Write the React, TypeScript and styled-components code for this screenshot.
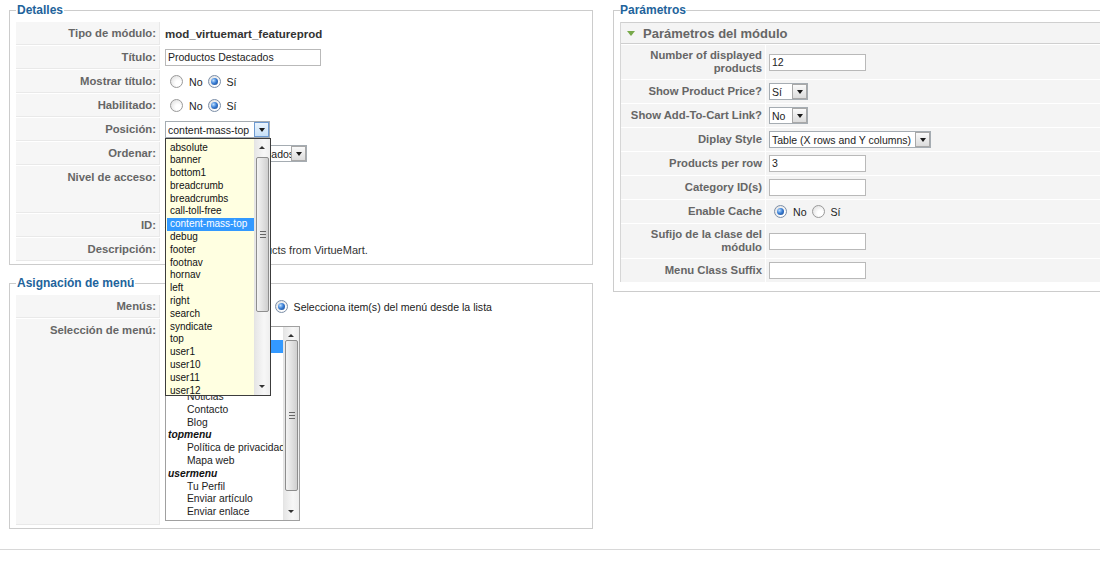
import React from 'react';
import styled, { createGlobalStyle, css } from 'styled-components';

const GlobalStyle = createGlobalStyle`
  html, body {
    margin: 0;
    padding: 0;
    background: #fff;
  }
  body {
    font-family: "Liberation Sans", Arial, sans-serif;
    font-size: 11px;
    color: #333;
  }
  * { box-sizing: border-box; }
`;

const Page = styled.div`
  width: 1100px;
  height: 561px;
  overflow: hidden;
`;

const Columns = styled.div`
  display: grid;
  grid-template-columns: 584px 520px;
  column-gap: 20px;
  padding: 3px 0 0 9px;
  align-items: start;
`;

const LeftCol = styled.div`
  display: flex;
  flex-direction: column;
  gap: 11px;
`;

const Fieldset = styled.fieldset<{ $pb?: number }>`
  margin: 0;
  min-width: 0;
  border: 1px solid #ccc;
  padding: 5px 6px ${p => p.$pb ?? 3}px 6px;
`;

const Legend = styled.legend<{ $pad?: number }>`
  padding: 0 ${p => p.$pad ?? 1}px;
  font-size: 12px;
  line-height: 14px;
  font-weight: bold;
  color: #22639b;
`;

const FormTable = styled.div`
  display: flex;
  flex-direction: column;
  gap: 1px;
`;

const Row = styled.div`
  display: flex;
  gap: 1px;
  min-height: 23px;
`;

const Key = styled.div<{ $top?: boolean }>`
  width: 144px;
  flex: none;
  background: #f6f6f6;
  border-bottom: 1px solid #e9e9e9;
  border-right: 1px solid #e9e9e9;
  padding: 5px 3px 4px 0;
  display: flex;
  justify-content: flex-end;
  align-items: ${p => (p.$top ? 'flex-start' : 'center')};
  text-align: right;
  font-weight: bold;
  font-size: 11.3px;
  line-height: 13px;
  color: #666;
`;

const Value = styled.div<{ $pad?: string }>`
  flex: 1;
  display: flex;
  align-items: center;
  padding: ${p => p.$pad ?? '0 4px'};
  font-size: 11px;
  color: #333;
  white-space: nowrap;
  position: relative;
`;

const TopValue = styled(Value)`
  align-items: flex-start;
`;

const Strong = styled.span`
  font-weight: bold;
  font-size: 11.5px;
  color: #333;
`;

const TextInput = styled.div<{ $w: number }>`
  width: ${p => p.$w}px;
  height: 17px;
  border: 1px solid #b9b9b9;
  background: #fff;
  font-size: 10.5px;
  line-height: 15px;
  padding: 0 2px;
  color: #222;
`;

const SelectWrap = styled.div`
  position: relative;
`;

const SelectBox = styled.div<{ $w: number }>`
  width: ${p => p.$w}px;
  height: 17px;
  border: 1px solid #a5acb2;
  background: #fff;
  display: flex;
  align-items: center;
  font-size: 10.5px;
  color: #222;
`;

const SelectText = styled.span`
  flex: 1;
  padding-left: 2px;
  overflow: hidden;
  white-space: nowrap;
`;

const SelectBtn = styled.span<{ $active?: boolean }>`
  width: 15px;
  height: 15px;
  flex: none;
  border: 1px solid #a8a8a8;
  background: linear-gradient(#fafafa, #dcdcdc);
  display: flex;
  align-items: center;
  justify-content: center;
  ${p =>
    p.$active &&
    css`
      border-color: #6d9ad2;
      background: linear-gradient(#eaf4fd, #c8e0f7);
    `}
  &::after {
    content: '';
    border-left: 3.5px solid transparent;
    border-right: 3.5px solid transparent;
    border-top: 4px solid #1a1a1a;
    margin-top: 1px;
  }
`;

const RadioGroup = styled.div`
  display: flex;
  align-items: center;
`;

const RadioDot = styled.span<{ $on?: boolean }>`
  width: 13px;
  height: 13px;
  border-radius: 50%;
  border: 1px solid #9a9a9a;
  background: radial-gradient(circle at 65% 65%, #ffffff 25%, #d9d9d9 100%);
  margin-left: 5px;
  display: inline-flex;
  align-items: center;
  justify-content: center;
  ${p =>
    p.$on &&
    css`
      border-color: #7b8ea8;
      &::after {
        content: '';
        width: 7px;
        height: 7px;
        border-radius: 50%;
        background: radial-gradient(circle at 35% 35%, #bfe0ff 0%, #3a7fd6 45%, #173f80 100%);
      }
    `}
`;

const RadioLabel = styled.span`
  margin-left: 6px;
  font-size: 10.6px;
  color: #222;
`;

/* dropdown list of the Posición select */
const DropList = styled.div`
  position: absolute;
  left: 0;
  top: 17px;
  width: 106px;
  height: 258px;
  border: 1px solid #3c3c3c;
  background: #ffffe1;
  display: flex;
  z-index: 10;
`;

const DropItems = styled.div`
  flex: 1;
  padding-top: 2.5px;
  overflow: hidden;
`;

const DropItem = styled.div<{ $sel?: boolean }>`
  height: 12.8px;
  line-height: 12.8px;
  font-size: 10px;
  padding-left: 3px;
  margin-left: 1px;
  color: #111;
  ${p =>
    p.$sel &&
    css`
      background: #3399ff;
      color: #fff;
    `}
`;

const Scrollbar = styled.div`
  width: 16px;
  flex: none;
  position: relative;
  background: linear-gradient(to right, #e6e6e6, #f7f7f7 60%, #eeeeee);
  border-left: 1px solid #e4e4e4;
`;

const ScrollArrow = styled.span<{ $down?: boolean }>`
  position: absolute;
  left: 4px;
  ${p => (p.$down ? 'bottom: 7px;' : 'top: 7px;')}
  border-left: 3px solid transparent;
  border-right: 3px solid transparent;
  ${p => (p.$down ? 'border-top: 3px solid #333;' : 'border-bottom: 3px solid #333;')}
`;

const ScrollThumb = styled.span`
  position: absolute;
  left: 1px;
  right: 1px;
  border: 1px solid #8e8e8e;
  border-radius: 2px;
  background: linear-gradient(to right, #f4f4f4, #e2e2e2 50%, #cfcfcf);
  display: flex;
  align-items: center;
  justify-content: center;
`;

const ThumbGrip = styled.span`
  width: 6px;
  height: 7px;
  background: repeating-linear-gradient(#666 0 1px, transparent 1px 3px);
`;

const ListBox = styled.div<{ $w: number; $h: number }>`
  width: ${p => p.$w}px;
  height: ${p => p.$h}px;
  border: 1px solid #a0a0a0;
  background: #fff;
  display: flex;
  overflow: hidden;
`;

const ListItems = styled.div`
  flex: 1;
  overflow: hidden;
`;

const ListItem = styled.div<{ $group?: boolean; $sel?: boolean }>`
  height: 12.8px;
  line-height: 12.8px;
  font-size: 10.3px;
  white-space: nowrap;
  color: #222;
  padding-left: ${p => (p.$group ? 1 : 20)}px;
  margin-left: 1px;
  ${p =>
    p.$group &&
    css`
      font-weight: bold;
      font-style: italic;
      color: #111;
    `}
  ${p =>
    p.$sel &&
    css`
      background: #3399ff;
      color: #fff;
    `}
`;

const Pane = styled.div`
  border-left: 1px solid #d6d6d6;
  background: #fff;
`;

const PaneHeader = styled.div`
  height: 22px;
  border-top: 1px solid #cfcfcf;
  border-bottom: 1px solid #cfcfcf;
  background: #f4f4f4;
  display: flex;
  align-items: center;
  gap: 8px;
  padding-left: 6px;
  font-size: 13px;
  font-weight: bold;
  color: #666;
`;

const PaneArrow = styled.span`
  border-left: 4px solid transparent;
  border-right: 4px solid transparent;
  border-top: 5px solid #78a94a;
  margin-top: 1px;
`;

const ParamTable = styled(FormTable)`
  padding-top: 1px;
`;

const ParamRow = styled(Row)``;

const ParamKey = styled(Key)`
  border: none;
  padding: 4px 3px 4px 0;
  background: #f4f4f4;
`;

const ParamValue = styled(Value)`
  background: #f4f4f4;
  padding: 0 3px;
`;

const Rule = styled.div`
  margin-top: 20px;
  border-top: 1px solid #d8d8d8;
`;

const positions = [
  'absolute', 'banner', 'bottom1', 'breadcrumb', 'breadcrumbs', 'call-toll-free',
  'content-mass-top', 'debug', 'footer', 'footnav', 'hornav', 'left', 'right',
  'search', 'syndicate', 'top', 'user1', 'user10', 'user11', 'user12',
];

const menuItems: { t: string; g?: boolean; sel?: boolean }[] = [
  { t: 'mainmenu', g: true },
  { t: 'Inicio', sel: true },
  { t: 'Tienda' },
  { t: 'Productos' },
  { t: 'Acerca de' },
  { t: 'Noticias' },
  { t: 'Contacto' },
  { t: 'Blog' },
  { t: 'topmenu', g: true },
  { t: 'Política de privacidad' },
  { t: 'Mapa web' },
  { t: 'usermenu', g: true },
  { t: 'Tu Perfil' },
  { t: 'Enviar artículo' },
  { t: 'Enviar enlace' },
];

const Radios = ({ options, on }: { options: string[]; on: number }) => (
  <RadioGroup>
    {options.map((o, i) => (
      <React.Fragment key={o}>
        <RadioDot $on={i === on} />
        <RadioLabel>{o}</RadioLabel>
      </React.Fragment>
    ))}
  </RadioGroup>
);

const Select = ({ w, text, active }: { w: number; text: string; active?: boolean }) => (
  <SelectBox $w={w}>
    <SelectText>{text}</SelectText>
    <SelectBtn $active={active} />
  </SelectBox>
);

const Bar = ({ top, height }: { top: number; height: number }) => (
  <Scrollbar>
    <ScrollArrow />
    <ScrollThumb style={{ top, height }}>
      <ThumbGrip />
    </ScrollThumb>
    <ScrollArrow $down />
  </Scrollbar>
);

export default function App() {
  return (
    <Page>
      <GlobalStyle />
      <Columns>
        <LeftCol>
          <Fieldset>
            <Legend>Detalles</Legend>
            <FormTable>
              <Row>
                <Key>Tipo de módulo:</Key>
                <Value><Strong>mod_virtuemart_featureprod</Strong></Value>
              </Row>
              <Row>
                <Key>Título:</Key>
                <Value><TextInput $w={156}>Productos Destacados</TextInput></Value>
              </Row>
              <Row>
                <Key>Mostrar título:</Key>
                <Value><Radios options={['No', 'Sí']} on={1} /></Value>
              </Row>
              <Row>
                <Key>Habilitado:</Key>
                <Value><Radios options={['No', 'Sí']} on={1} /></Value>
              </Row>
              <Row>
                <Key>Posición:</Key>
                <Value>
                  <SelectWrap>
                    <Select w={105} text="content-mass-top" active />
                    <DropList>
                      <DropItems>
                        {positions.map(p => (
                          <DropItem key={p} $sel={p === 'content-mass-top'}>{p}</DropItem>
                        ))}
                      </DropItems>
                      <Bar top={18} height={155} />
                    </DropList>
                  </SelectWrap>
                </Value>
              </Row>
              <Row>
                <Key>Ordenar:</Key>
                <Value><Select w={142} text="10::&nbsp;Productos Destacados" /></Value>
              </Row>
              <Row>
                <Key $top>Nivel de acceso:</Key>
                <TopValue $pad="3px 4px">
                  <ListBox $w={90} $h={41}>
                    <ListItems>
                      <ListItem $group>Público</ListItem>
                      <ListItem $group>Registrado</ListItem>
                      <ListItem $group>Especial</ListItem>
                    </ListItems>
                  </ListBox>
                </TopValue>
              </Row>
              <Row>
                <Key>ID:</Key>
                <Value>47</Value>
              </Row>
              <Row>
                <Key>Descripción:</Key>
                <Value>Show Featured Products from VirtueMart.</Value>
              </Row>
            </FormTable>
          </Fieldset>

          <Fieldset>
            <Legend>Asignación de menú</Legend>
            <FormTable>
              <Row>
                <Key>Menús:</Key>
                <Value><Radios options={['Todo', 'Ningún', 'Selecciona item(s) del menú desde la lista']} on={2} /></Value>
              </Row>
              <Row>
                <Key $top>Selección de menú:</Key>
                <TopValue $pad="7px 4px 4px">
                  <ListBox $w={135} $h={195}>
                    <ListItems>
                      {menuItems.map(m => (
                        <ListItem key={m.t} $group={m.g} $sel={m.sel}>{m.t}</ListItem>
                      ))}
                    </ListItems>
                    <Bar top={13} height={151} />
                  </ListBox>
                </TopValue>
              </Row>
            </FormTable>
          </Fieldset>
        </LeftCol>

        <Fieldset $pb={9}>
          <Legend $pad={0}>Parámetros</Legend>
          <Pane>
            <PaneHeader>
              <PaneArrow />
              Parámetros del módulo
            </PaneHeader>
            <ParamTable>
              <ParamRow>
                <ParamKey>Number of displayed<br />products</ParamKey>
                <ParamValue><TextInput $w={97}>12</TextInput></ParamValue>
              </ParamRow>
              <ParamRow>
                <ParamKey>Show Product Price?</ParamKey>
                <ParamValue><Select w={39} text="Sí" /></ParamValue>
              </ParamRow>
              <ParamRow>
                <ParamKey>Show Add-To-Cart Link?</ParamKey>
                <ParamValue><Select w={39} text="No" /></ParamValue>
              </ParamRow>
              <ParamRow>
                <ParamKey>Diplay Style</ParamKey>
                <ParamValue><Select w={162} text="Table (X rows and Y columns)" /></ParamValue>
              </ParamRow>
              <ParamRow>
                <ParamKey>Products per row</ParamKey>
                <ParamValue><TextInput $w={97}>3</TextInput></ParamValue>
              </ParamRow>
              <ParamRow>
                <ParamKey>Category ID(s)</ParamKey>
                <ParamValue><TextInput $w={97} /></ParamValue>
              </ParamRow>
              <ParamRow>
                <ParamKey>Enable Cache</ParamKey>
                <ParamValue><Radios options={['No', 'Sí']} on={0} /></ParamValue>
              </ParamRow>
              <ParamRow>
                <ParamKey>Sufijo de la clase del<br />módulo</ParamKey>
                <ParamValue><TextInput $w={97} /></ParamValue>
              </ParamRow>
              <ParamRow>
                <ParamKey>Menu Class Suffix</ParamKey>
                <ParamValue><TextInput $w={97} /></ParamValue>
              </ParamRow>
            </ParamTable>
          </Pane>
        </Fieldset>
      </Columns>
      <Rule />
    </Page>
  );
}
